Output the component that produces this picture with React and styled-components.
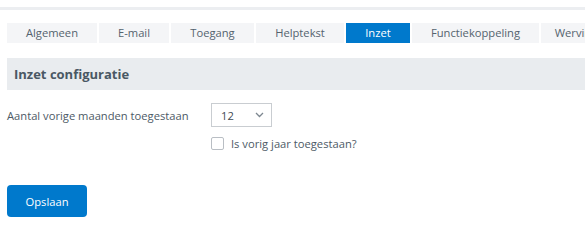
import React from "react";
import styled, { createGlobalStyle } from "styled-components";

const Global = createGlobalStyle`
  html, body { margin: 0; padding: 0; background: #fff; }
  body { font-family: "Open Sans", "Liberation Sans", sans-serif; color: #4d5a66; }
`;

const Page = styled.div`
  width: 585px;
  height: 244px;
  overflow: hidden;
  padding-top: 7px;
  box-sizing: border-box;
`;

const TopRule = styled.div`
  height: 3px;
  background: #eceef1;
`;

const Body = styled.div`
  padding: 13px 0 0 7px;
`;

const Tabs = styled.div`
  display: flex;
  gap: 2px;
  white-space: nowrap;
`;

const Tab = styled.div`
  flex: none;
  width: ${(p) => p.$w}px;
  height: 20px;
  line-height: 20px;
  text-align: center;
  overflow: hidden;
  font-size: 11.2px;
  background: ${(p) => (p.$active ? "#0079cc" : "#f4f5f7")};
  color: ${(p) => (p.$active ? "#fff" : "#55636e")};
`;

const Header = styled.div`
  margin-top: 15px;
  height: 32px;
  background: #e9ecef;
  display: flex;
  align-items: center;
  padding-left: 7px;
  font-size: 13px;
  font-weight: 700;
  color: #4a5864;
`;

const Row = styled.div`
  display: flex;
  align-items: center;
  margin-top: 13px;
`;

const Label = styled.div`
  width: 204px;
  font-size: 11.2px;
  color: #4d5a66;
`;

const Select = styled.div`
  width: 61px;
  height: 24px;
  box-sizing: border-box;
  border: 1px solid #c9cdd1;
  display: flex;
  align-items: center;
  justify-content: space-between;
  padding: 0 7px 0 9px;
  font-size: 11.2px;
  color: #3f4a54;
`;

const CheckRow = styled.label`
  display: flex;
  align-items: center;
  gap: 7px;
  margin: 9px 0 0 204px;
  font-size: 11.2px;
  color: #4d5a66;
`;

const Box = styled.span`
  width: 13px;
  height: 13px;
  box-sizing: border-box;
  border: 1px solid #b9bec4;
  border-radius: 2px;
  background: #fff;
`;

const Button = styled.button`
  display: block;
  margin-top: 34px;
  width: 80px;
  height: 32px;
  border: none;
  border-radius: 4px;
  background: #0079cc;
  color: #fff;
  font-family: "Open Sans", "Liberation Sans", sans-serif;
  font-size: 11.2px;
  padding: 0;
`;

const tabs = [
  ["Algemeen", 90],
  ["E-mail", 70],
  ["Toegang", 83],
  ["Helptekst", 88],
  ["Inzet", 64],
  ["Functiekoppeling", 127],
  ["Werving", 70],
];

export default function App() {
  return (
    <Page>
      <Global />
      <TopRule />
      <Body>
        <Tabs>
          {tabs.map(([t, w]) => (
            <Tab key={t} $w={w} $active={t === "Inzet"}>
              {t}
            </Tab>
          ))}
        </Tabs>
        <Header>Inzet configuratie</Header>
        <Row>
          <Label>Aantal vorige maanden toegestaan</Label>
          <Select>
            <span>12</span>
            <svg width="9" height="6" viewBox="0 0 9 6">
              <path d="M1 1l3.5 3.5L8 1" fill="none" stroke="#7d8790" strokeWidth="1.3" />
            </svg>
          </Select>
        </Row>
        <CheckRow>
          <Box />
          Is vorig jaar toegestaan?
        </CheckRow>
        <Button>Opslaan</Button>
      </Body>
    </Page>
  );
}
